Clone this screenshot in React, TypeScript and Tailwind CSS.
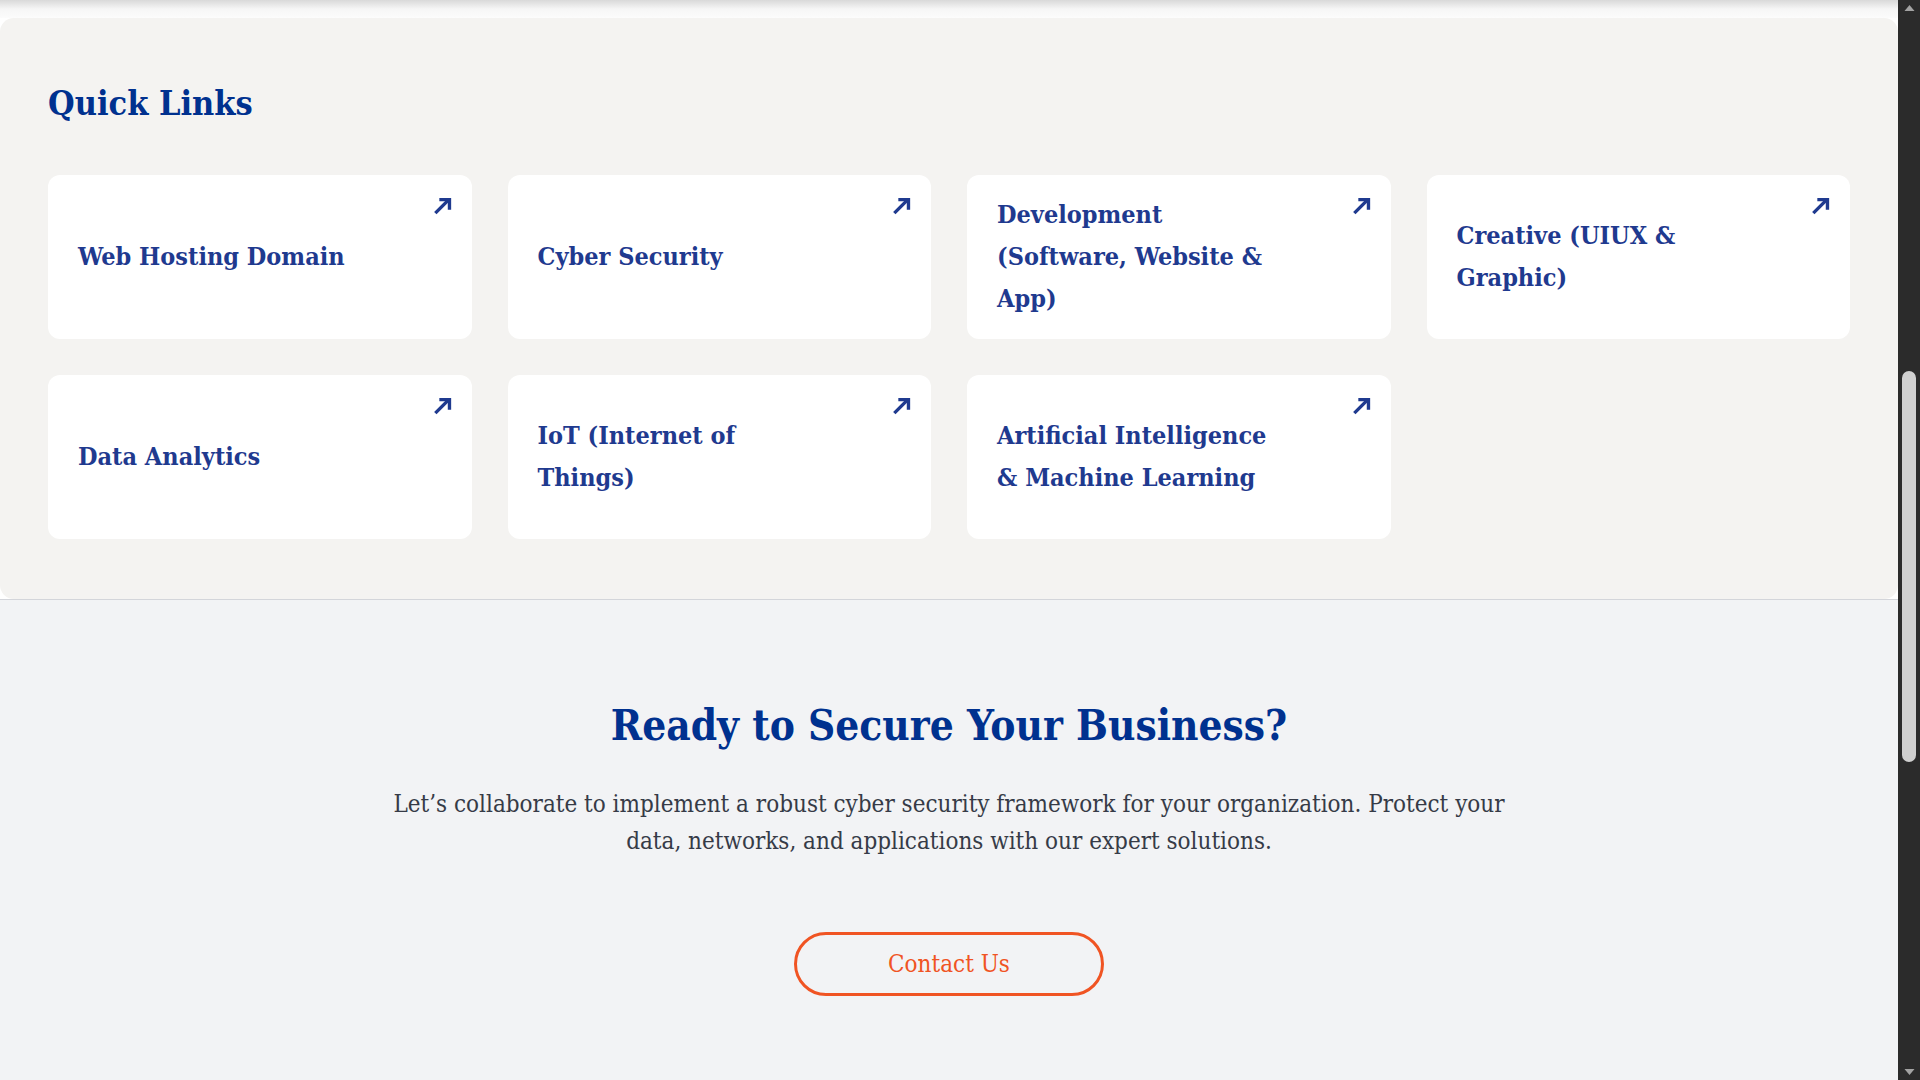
import React from 'react';

const slab = "font-['Roboto_Slab','DejaVu_Serif_Condensed','DejaVu_Serif',serif]";

const links = [
    'Web Hosting Domain',
    'Cyber Security',
    'Development (Software, Website & App)',
    'Creative (UIUX & Graphic)',
    'Data Analytics',
    'IoT (Internet of Things)',
    'Artificial Intelligence & Machine Learning',
];

function ArrowIcon() {
    return (
        <svg viewBox="0 0 18 18" className="h-[19px] w-[19px]" fill="none" stroke="#1f3a8f" strokeWidth="3.2">
            <path d="M2.2 16.2L15 3.4" />
            <path d="M6 3.4h9.6V13" strokeLinejoin="miter" />
        </svg>
    );
}

function LinkCard({ title }: { title: string }) {
    return (
        <a href="#" className="relative flex h-[164px] items-center rounded-xl bg-white pl-[30px]">
            <span className="max-w-[282px] text-[25px] font-semibold leading-[42px] text-[#1f3a8f]">
                {title}
            </span>
            <span className="absolute right-[20px] top-[21px]">
                <ArrowIcon />
            </span>
        </a>
    );
}

function Scrollbar() {
    return (
        <div className="flex h-screen w-[22px] flex-col items-center bg-[#2b2b2b]">
            <svg viewBox="0 0 10 6" className="mt-[5px] h-[6px] w-[11px] fill-[#a3a3a3]">
                <path d="M5 0L10 6H0z" />
            </svg>
            <div className="mt-[360px] h-[391px] w-[14px] rounded-full bg-[#d0d0d0]" />
            <div className="flex-1" />
            <svg viewBox="0 0 10 6" className="mb-[5px] h-[6px] w-[11px] fill-[#a3a3a3]">
                <path d="M0 0H10L5 6z" />
            </svg>
        </div>
    );
}

export default function App() {
    return (
        <div className={`flex h-screen overflow-hidden bg-white ${slab}`}>
            <div className="flex flex-1 flex-col">
                <div className="h-[18px] bg-gradient-to-b from-[#d9d9d9] via-[#f6f6f6] to-[#fcfcfc]" />

                {/* Quick links */}
                <section className="rounded-[14px] bg-[#f4f3f1] px-12 pb-[60px] pt-16">
                    <h2 className="text-[34px] font-bold leading-[43px] text-[#00318f]">Quick Links</h2>
                    <div className="mt-[50px] grid grid-cols-4 gap-9">
                        {links.map((title) => (
                            <LinkCard key={title} title={title} />
                        ))}
                    </div>
                </section>

                {/* Call to action */}
                <section className="flex flex-1 flex-col items-center border-t border-[#d3d5da] bg-[#f2f3f5] pt-[102px]">
                    <h2 className="text-[42px] font-bold leading-[48px] text-[#00318f]">
                        Ready to Secure Your Business?
                    </h2>
                    <p className="mt-[36px] text-center text-[24px] font-light leading-[37px] text-[#363b47]">
                        Let&rsquo;s collaborate to implement a robust cyber security framework for your organization. Protect your
                        <br />
                        data, networks, and applications with our expert solutions.
                    </p>
                    <button className="mt-[72px] h-[64px] w-[310px] rounded-full border-[3px] border-[#f05423] text-[24px] text-[#f05423]">
                        Contact Us
                    </button>
                </section>
            </div>
            <Scrollbar />
        </div>
    );
}
